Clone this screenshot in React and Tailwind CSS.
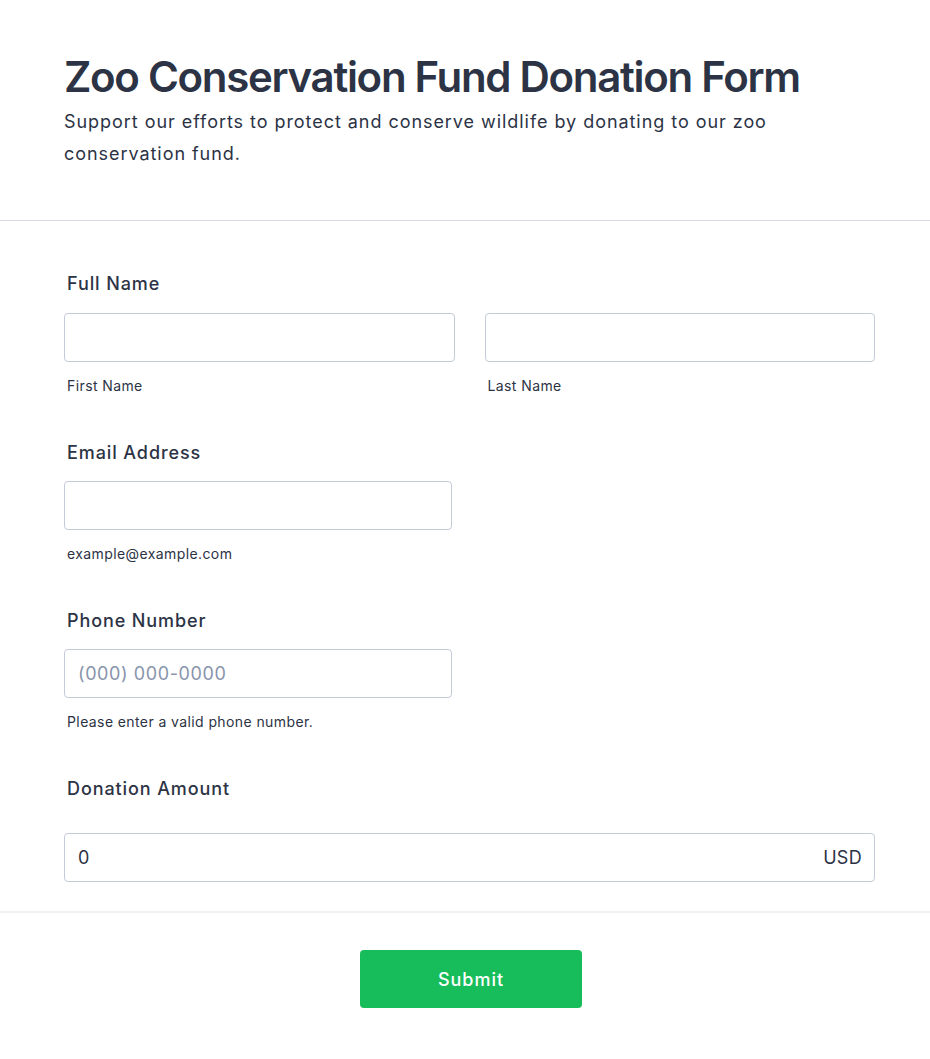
import React from "react";

const font = { fontFamily: "Inter, 'Noto Sans', sans-serif" };

function Label({ children, className = "" }) {
  return (
    <div className={`pl-[3px] text-[18px] leading-[28px] font-medium tracking-[0.9px] text-[#2c3345] ${className}`}>
      {children}
    </div>
  );
}

function Sub({ children }) {
  return (
    <div className="mt-[14px] pl-[3px] text-[14px] leading-[20px] tracking-[0.4px] text-[#2c3345]">{children}</div>
  );
}

function Input({ className = "", placeholder }) {
  return (
    <div
      className={`h-[49px] rounded-[4px] border border-[#c3cad8] bg-white px-[13px] flex items-center text-[18px] tracking-[0.6px] ${className}`}
    >
      {placeholder && <span className="text-[#8894ab]">{placeholder}</span>}
    </div>
  );
}

export default function App() {
  return (
    <div className="min-h-[1059px] w-[930px] bg-white text-[#2c3345]" style={font}>
      <div className="px-[64px] pt-[52px] pb-[50px] border-b border-[#d8dae6]">
        <h1 className="text-[42px] leading-[50px] font-semibold tracking-[-1.3px] text-[#2c3345]">
          Zoo Conservation Fund Donation Form
        </h1>
        <p className="mt-[4px] text-[18px] leading-[32px] tracking-[0.95px] text-[#2c3345] max-w-[802px]">
          Support our efforts to protect and conserve wildlife by donating to our zoo conservation fund.
        </p>
      </div>

      <div className="px-[64px] pt-[49px] pb-[29px] border-b-2 border-[#f0f1f5]">
        <Label>Full Name</Label>
        <div className="mt-[15px] grid grid-cols-2 gap-[30px] w-[811px]">
          <div>
            <Input />
            <Sub>First Name</Sub>
          </div>
          <div>
            <Input />
            <Sub>Last Name</Sub>
          </div>
        </div>

        <Label className="mt-[43px]">Email Address</Label>
        <div className="mt-[14px] w-[388px]">
          <Input />
          <Sub>example@example.com</Sub>
        </div>

        <Label className="mt-[43px]">Phone Number</Label>
        <div className="mt-[14px] w-[388px]">
          <Input placeholder="(000) 000-0000" />
          <Sub>Please enter a valid phone number.</Sub>
        </div>

        <Label className="mt-[43px]">Donation Amount</Label>
        <div className="mt-[30px] w-[811px] h-[49px] rounded-[4px] border border-[#c3cad8] bg-white pl-[13px] pr-[12px] flex items-center justify-between text-[18px] tracking-[0.3px] text-[#2c3345]">
          <span>0</span>
          <span>USD</span>
        </div>
      </div>

      <div className="flex justify-center pl-[12px] pt-[37px] pb-[50px]">
        <button className="w-[222px] h-[58px] rounded-[4px] bg-[#18bd5b] text-white text-[18px] font-medium tracking-[1px]">
          Submit
        </button>
      </div>
    </div>
  );
}
